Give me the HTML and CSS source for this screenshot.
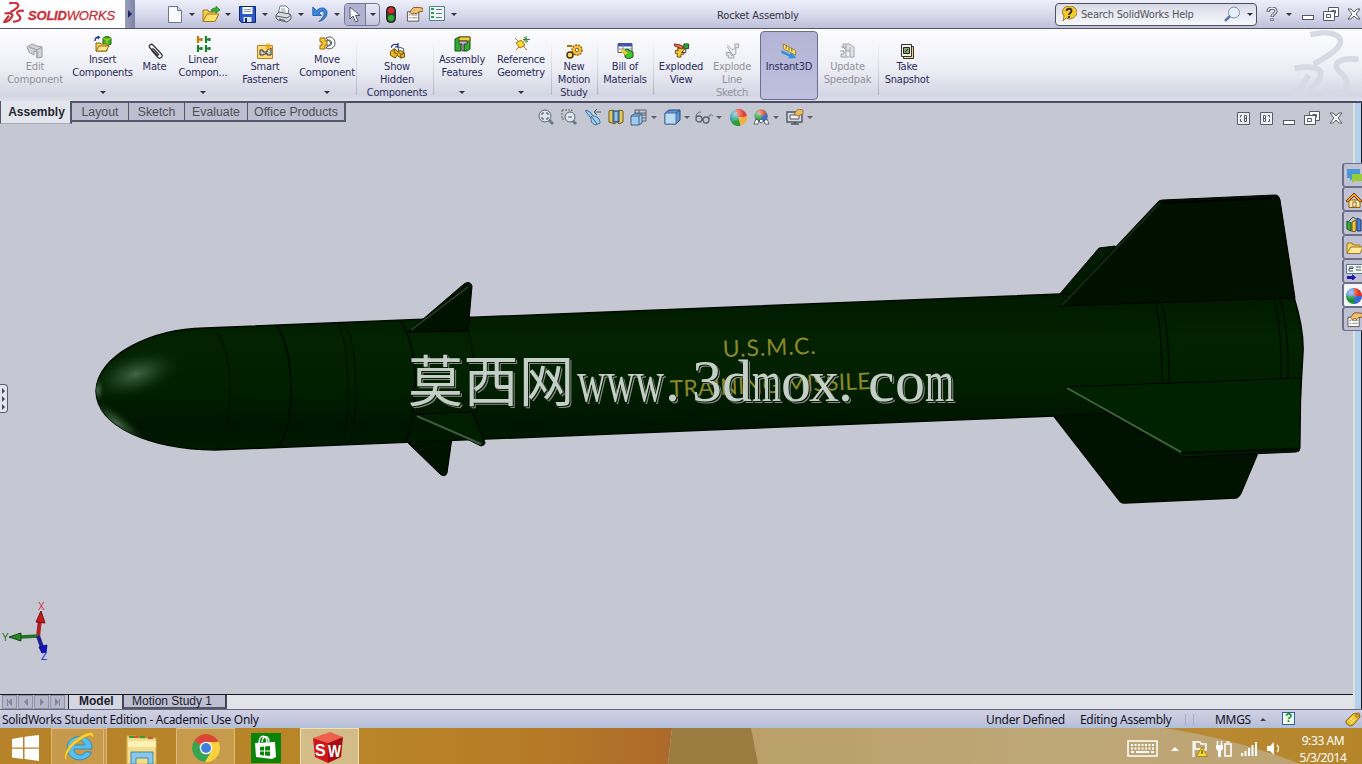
FILE: index.html
```html
<!DOCTYPE html>
<html lang="en">

<head>
    <meta charset="UTF-8">
    <meta name="viewport" content="width=device-width, initial-scale=1.0">
    <title>Rocket Assembly</title>
    <link rel="stylesheet" href="styles.css">
</head>

<body>
    <!-- shared shapes -->
    <svg class="defs" width="0" height="0">
        <defs>
            <radialGradient id="gloss" cx="32%" cy="28%" r="50%">
                <stop offset="0" stop-color="#fff" stop-opacity=".6" />
                <stop offset="1" stop-color="#fff" stop-opacity="0" />
            </radialGradient>
            <symbol id="ball" viewBox="0 0 16 16">
                <path d="M8 8V0a8 8 0 0 0-8 8z" fill="#3a78d8" />
                <path d="M8 8V0a8 8 0 0 1 8 8z" fill="#e03020" />
                <path d="M8 8H0a8 8 0 0 0 8 8z" fill="#189030" />
                <path d="M8 8v8a8 8 0 0 0 8-8z" fill="#3868d0" />
                <circle cx="8" cy="8" r="8" fill="url(#gloss)" />
            </symbol>
            <symbol id="ballgreen" viewBox="0 0 16 16">
                <path d="M8 8L5 .6A8 8 0 0 0 1 12z" fill="#2498a0" />
                <path d="M8 8L5 .6A8 8 0 0 1 16 7z" fill="#e2402c" />
                <path d="M8 8L1 12a8 8 0 0 0 9 3.700z" fill="#2a9c38" />
                <path d="M8 8l2 7.700A8 8 0 0 0 16 7z" fill="#f0b040" />
                <circle cx="8" cy="8" r="8" fill="url(#gloss)" />
            </symbol>
            <symbol id="restore" viewBox="0 0 16 14">
                <path d="M5.500 4.500v-4h10v9h-4M.5 4.500h11v9H.5zM3.500 7.500h4v3h-4zM8.500 3.500h4v3" fill="#fff" stroke="#55586a" />
            </symbol>
            <symbol id="close" viewBox="0 0 14 12">
                <path d="M1 1h3l3 3 3-3h3L9 6l4 5h-3L7 8l-3 3H1l4-5z" fill="#fff" stroke="#55586a" />
            </symbol>
            <symbol id="card" viewBox="0 0 18 17">
                <path d="M1.500 5.500h12v10h-12z" fill="#fdfdf6" stroke="#55545a" />
                <path d="M3 9h2M6 9h6M3 12h2M6 12h6" stroke="#888" />
                <path d="M4 6l4-5h6l4 1v3l-5 1-2 2-2-1-3 1z" fill="#f6c070" stroke="#6a4510" stroke-width=".9" />
            </symbol>
            <symbol id="ds" viewBox="0 0 64 62">
                <path d="M18 4C38-1 52 6 41 17 35 23 29 26 21 30" />
                <path d="M4 34C22 31 33 34 24 46 18 55 9 59 3 59L17 40" />
                <path d="M61 26C46 24 36 29 44 37 56 47 52 57 29 58" />
            </symbol>
        </defs>
    </svg>

    <div class="titlebar">
        <div class="brand">
            <svg class="brand-ds" width="22" height="21" viewBox="0 0 64 62"><use href="#ds" /></svg>
            <span class="brand-name"><b>SOLID</b>WORKS</span>
        </div>
        <div class="brand-more"><i></i></div>
        <div class="quick">
            <svg class="q-new" width="14" height="17" viewBox="0 0 14 17"><path d="M.5.5h9l4 4v12H.5z" fill="#fbfcff" stroke="#687890" /><path d="M9.500.5v4h4" fill="#cfdae8" stroke="#687890" /></svg>
            <i class="arrow"></i>
            <svg class="q-open" width="18" height="17" viewBox="0 0 18 17"><path d="M1 15V4h5l1 2h7v3" fill="#f6d050" stroke="#a07818" /><path d="M1 15.500L5 8h12l-4 7.500z" fill="#ffe070" stroke="#a07818" /><path d="M9 6c0-4 3-4 5-4V0l4 4-4 3V5c-2 0-4 0-5 1z" fill="#38b038" stroke="#157015" stroke-width=".6" /></svg>
            <i class="arrow"></i>
            <svg class="q-save" width="17" height="17" viewBox="0 0 17 17"><path d="M.5.5h16v16H2.500l-2-2z" fill="#2858c8" stroke="#102868" /><path d="M3.500 1h10v7h-10z" fill="#fff" /><path d="M5 3.500h7M5 5.500h7" stroke="#7a9ac8" /><path d="M4.500 11h8v5h-8z" fill="#dce6f4" /><path d="M6 12h2v4H6z" fill="#102868" /></svg>
            <i class="arrow"></i>
            <svg class="q-print" width="17" height="18" viewBox="0 0 17 18"><path d="M3 9L5 1h6l3 3-1 5z" fill="#fff" stroke="#778" /><path d="M6 4h4M6 6h5" stroke="#7ab" /><path d="M1 10l3-3 11 2 1 2v3l-4 3-9-2-2-2z" fill="#d8dade" stroke="#555a68" /><path d="M1 11l11 2 4-3M4 14l6 1.500" fill="none" stroke="#555a68" /></svg>
            <i class="arrow"></i>
            <svg class="q-undo" width="17" height="17" viewBox="0 0 17 17"><path d="M4.500 4.500c6-5 11-2 10.500 3-.5 4-4 7-8 8 3-3 5-5 5-8 0-3-3-3-5-.5l2.500 2.500H.8V1z" fill="#3a86dc" stroke="#1650a0" stroke-width=".8" /></svg>
            <i class="arrow"></i>
            <span class="select">
                <span class="select-main"><svg width="12" height="17" viewBox="0 0 12 17"><path d="M1 1v12l3-3 2.500 6 2.500-1-2.500-5.500H11z" fill="#fff" stroke="#555868" /></svg></span>
                <span class="select-more"><i class="arrow"></i></span>
            </span>
            <svg class="q-light" width="10" height="17" viewBox="0 0 10 17"><rect x=".5" y=".5" width="9" height="16" rx="4" fill="#413b35" stroke="#222" /><circle cx="5" cy="4.500" r="3" fill="#e02828" /><circle cx="5" cy="12" r="3" fill="#28b028" /></svg>
            <svg class="q-card" width="17" height="17" viewBox="0 0 18 17"><use href="#card" /></svg>
            <svg class="q-list" width="16" height="16" viewBox="0 0 16 16"><path d="M.5.5h15v14H.5z" fill="#eef6f6" stroke="#588098" /><path d="M2 3h3M2 7h3M2 11h3" stroke="#28a040" stroke-width="2" /><path d="M7 3.500h6M7 7.500h6M7 11.500h6" stroke="#588098" /></svg>
            <i class="arrow"></i>
        </div>
        <div class="doc-title">Rocket Assembly</div>
        <div class="search">
            <svg width="16" height="16" viewBox="0 0 16 16"><path d="M5 12l-3 3 1-5C-1 5 3 0 8 0c5 0 8 3 8 6.500S12 13 8 13z" fill="#f4c830" stroke="#906810" stroke-width=".8" /><path d="M5.500 5c0-3 5-3 5 0 0 2-2.500 2-2.500 4M8 10v2" fill="none" stroke="#303030" stroke-width="1.800" /></svg>
            <span>Search SolidWorks Help</span>
            <svg class="glass" width="17" height="17" viewBox="0 0 17 17"><path d="M6 10l-5 5" stroke="#5878a8" stroke-width="2.500" /><circle cx="10" cy="6.500" r="5.500" fill="#e4f0fa" stroke="#8090a8" /></svg>
            <i class="arrow"></i>
        </div>
        <div class="winbtns">
            <svg class="w-help" width="12" height="15" viewBox="0 0 12 15"><path d="M2 5c0-5 8-5 8-1 0 3-4 3-4 6M6 11.500V14" fill="none" stroke="#55586a" stroke-width="3.200" /><path d="M2 4.500c0-4.500 8-4.500 8-.5 0 3-4 3-4 5.500M6 12v1.500" fill="none" stroke="#fff" stroke-width="1.200" /></svg>
            <i class="arrow"></i>
            <i class="min"></i>
            <svg width="16" height="14"><use href="#restore" /></svg>
            <svg class="w-close" width="14" height="12"><use href="#close" /></svg>
        </div>
    </div>

    <div class="ribbon">
        <div class="cmd off" style="width:70px">
            <svg width="18" height="16" viewBox="0 0 18 16"><path d="M1 4l5-3 5 2 5 1v10l-5 1V9L8 8v4L3 9z" fill="#d2d3d8" stroke="#9a9ba2" /><path d="M3 4l8 3 5-3M11 7v8" fill="none" stroke="#9a9ba2" /></svg>
            <span>Edit<br>Component</span>
        </div>
        <div class="cmd drop" style="width:65px">
            <svg width="18" height="16" viewBox="0 0 18 16"><path d="M9 2l4-2 4 2v6l-4 2-4-2z" fill="#38b828" stroke="#176010" /><path d="M9 2l4 2 4-2M13 4v6" fill="none" stroke="#e0d020" /><path d="M2 15V7h4l1 1h6v7z" fill="#f7cf58" stroke="#906a10" /><path d="M2 15l3-5h10l-3 5z" fill="#ffe98c" stroke="#906a10" /><path d="M1 5c0-3 2-4 4-4l-1-1M5 1L4 3" fill="none" stroke="#1838a8" stroke-width="1.400" /></svg>
            <span>Insert<br>Components</span><i class="arrow"></i>
        </div>
        <div class="cmd" style="width:39px">
            <svg width="16" height="16" viewBox="0 0 16 16"><path d="M11 13L3 5C1 3 4 0 6 2l8 8.500c3 3-1 6-3 4L5 8c-1-1.500.5-3 2-1.500l5 5.500" fill="none" stroke="#333" stroke-width="1.200" /></svg>
            <span>Mate</span>
        </div>
        <div class="cmd drop" style="width:58px">
            <svg width="15" height="16" viewBox="0 0 15 16"><path d="M2 0v7M2 3.500h4M5.500 2v3" stroke="#c07808" stroke-width="2.200" /><path d="M10 0v7M10 3.500h4M13.500 2v3M2 9v7M2 12.500h4M5.500 11v3M10 9v7M10 12.500h4M13.500 11v3" stroke="#188028" stroke-width="2.200" /></svg>
            <span>Linear<br>Compon...</span><i class="arrow"></i>
        </div>
        <div class="cmd" style="width:66px">
            <svg width="17" height="16" viewBox="0 0 17 16"><path d="M.5 2.500h15v13H.5z" fill="#ffd878" stroke="#c08020" /><path d="M3 7h3v2h4V7l4-2v7h-4v-2l-4 2H3z" fill="#d0d0c0" stroke="#333" /><path d="M11 0v7M8 3h7M9 1l4 5M13 1L9 6" stroke="#f0a000" /></svg>
            <span>Smart<br>Fasteners</span>
        </div>
        <div class="cmd drop" style="width:58px">
            <svg width="17" height="16" viewBox="0 0 17 16"><path d="M7 2c5-3 9 1 9 5 0 5-5 7-9 5l2-2c5 0 5-6 0-6z" fill="#fff" stroke="#555" /><circle cx="9" cy="7" r="2.500" fill="#fff" stroke="#555" /><path d="M1 2h5v3h2v4H6v4H1V9h2V6H1z" fill="#f7c830" stroke="#a06808" /></svg>
            <span>Move<br>Component</span><i class="arrow"></i>
        </div>
        <div class="cmd line" style="width:77px;padding-left:5px">
            <svg width="17" height="17" viewBox="0 0 17 17"><path d="M2 5c0-4 5-4 7-3M9 0v4H6" fill="none" stroke="#1838a8" stroke-width="1.300" /><path d="M9 4l6 2v5l-5-2z" fill="#fff" stroke="#444" /><path d="M1 9l4-3 4 3 3-1 4 3v4l-4 1-4-3-2 3-5-3z" fill="#e8b820" stroke="#664808" /><path d="M5 6v4l4 2M9 9l3 3 4-1M12 12v4" fill="none" stroke="#664808" /></svg>
            <span>Show<br>Hidden<br>Components</span>
        </div>
        <div class="cmd drop line" style="width:58px">
            <svg width="17" height="16" viewBox="0 0 17 16"><path d="M1 3l4-2h11v12l-3 2h-3V8H7v7H1z" fill="#2fb02c" stroke="#14501a" /><path d="M5 1h11v4H5z" fill="#f6cf40" stroke="#705010" /><path d="M5 5h8v3h-3v7H8V8H5z" fill="#bbb" stroke="#444" /></svg>
            <span>Assembly<br>Features</span><i class="arrow"></i>
        </div>
        <div class="cmd drop" style="width:60px">
            <svg width="17" height="16" viewBox="0 0 17 16"><path d="M2 2l12 12M14 2L3 14" stroke="#b07808" /><path d="M3 7l5-3 4 5-5 3z" fill="#ffd838" stroke="#a87008" /><path d="M13 0v7M10 3.500h7M11 1l4 5" stroke="#288838" /></svg>
            <span>Reference<br>Geometry</span><i class="arrow"></i>
        </div>
        <div class="cmd line" style="width:46px">
            <svg width="17" height="16" viewBox="0 0 17 16"><path d="M1 3h5" stroke="#b07010" stroke-width="2" /><circle cx="11" cy="7" r="5" fill="#ffc838" stroke="#8a5808" stroke-dasharray="2 1" stroke-width="1.400" /><circle cx="11" cy="7" r="1.800" fill="#fff" stroke="#8a5808" /><circle cx="4" cy="12" r="3" fill="#ffd860" stroke="#4a3408" stroke-width="1.500" /></svg>
            <span>New<br>Motion<br>Study</span>
        </div>
        <div class="cmd line" style="width:56px">
            <svg width="17" height="16" viewBox="0 0 17 16"><path d="M1 .5h14v9H1z" fill="#fff" stroke="#556" /><path d="M1 2h14" stroke="#3858b0" stroke-width="3" /><path d="M1 6h14M6 2v7" stroke="#889" /><path d="M5 9l5-3 6 3v5l-5 2-3-2v-2z" fill="#48c030" stroke="#1a6014" /><path d="M3 8l3-2 5 4-3 2z" fill="#f4c838" /></svg>
            <span>Bill of<br>Materials</span>
        </div>
        <div class="cmd line" style="width:56px">
            <svg width="17" height="17" viewBox="0 0 17 17"><path d="M11 1h5v5h-5z" fill="#30a038" stroke="#165018" /><path d="M1 1l6 1 4 2-3 2-7-3z" fill="#e87848" stroke="#702010" /><path d="M4 6h8l-3 4h2v2H8v3H4v-4H2V8h3z" fill="#f8c838" stroke="#704808" /><path d="M13 6v4H8" fill="none" stroke="#333" /></svg>
            <span>Exploded<br>View</span>
        </div>
        <div class="cmd off" style="width:46px">
            <svg width="17" height="17" viewBox="0 0 17 17"><path d="M11 1h4v4h-4zM2 10h5v3h3v3H4v-3H2z" fill="#e4e4e9" stroke="#a2a3aa" /><path d="M3 2l5 5 4-1v6H8L3 4" fill="none" stroke="#a2a3aa" /></svg>
            <span>Explode<br>Line<br>Sketch</span>
        </div>
        <div class="cmd pressed">
            <svg width="18" height="17" viewBox="0 0 18 17"><path d="M3 1l13 7v5L3 6z" fill="#ffe870" stroke="#a07828" /><path d="M6 3v3M9 5v3M12 6v3" stroke="#705010" /><path d="M1 7.500l9 4.500 1-2 6 6-9 .5 1.500-2L1 10.500z" fill="#3090d8" /></svg>
            <span>Instant3D</span>
        </div>
        <div class="cmd off" style="width:61px">
            <svg width="17" height="16" viewBox="0 0 17 16"><path d="M4 1h6l5 3v10h-4V8H8L4 4zM1 8h4v3H2v3h8" fill="#e2e2e7" stroke="#a2a3aa" /><path d="M2 4h5M7 2v11M11 4v4" stroke="#a2a3aa" /></svg>
            <span>Update<br>Speedpak</span>
        </div>
        <div class="cmd line" style="width:58px">
            <svg width="15" height="16" viewBox="0 0 15 16"><path d="M3.500 3.500h10v12h-10z" fill="#e8d890" stroke="#333" /><path d="M1.500 1.500h10v12h-10z" fill="#f4f4e4" stroke="#333" /><path d="M3.500 4.500h6v6h-6z" fill="#88a870" stroke="#222" /><path d="M5 9l3-3" stroke="#222" /></svg>
            <span>Take<br>Snapshot</span>
        </div>
        <svg class="ribbon-ds" width="72" height="70" viewBox="0 0 64 62"><use href="#ds" /></svg>
    </div>

    <div class="view">
        <svg class="scene" width="1362" height="591" viewBox="0 103 1362 591">
            <defs>
                <linearGradient id="hull" x1="0" y1="0" x2=".04" y2="1">
                    <stop offset="0" stop-color="#001900" />
                    <stop offset=".3" stop-color="#022200" />
                    <stop offset=".6" stop-color="#002000" />
                    <stop offset=".85" stop-color="#001500" />
                    <stop offset="1" stop-color="#001a00" />
                </linearGradient>
                <radialGradient id="shine">
                    <stop offset="0" stop-color="#54765a" stop-opacity=".8" />
                    <stop offset=".45" stop-color="#2c502c" stop-opacity=".55" />
                    <stop offset="1" stop-color="#022200" stop-opacity="0" />
                </radialGradient>
                <clipPath id="nose"><path d="M96 391C97 356 150 329 205 328L1060 294V416L215 450C150 449 97 427 96 391z" /></clipPath>
            </defs>

            <!-- rear fins behind the hull -->
            <path d="M1053 415L1119 500Q1121 503 1125 503L1236 498Q1239 497 1241 493L1257 455L1180 400z" fill="#001300" stroke="#000a00" stroke-width="1.500" />
            <path d="M1058 296L1099 248L1115 246L1130 260L1090 300z" fill="#001a00" stroke="#000" />
            <path d="M406 441L440 474Q445 478 447 473L452 438z" fill="#001200" stroke="#000" />

            <!-- hull -->
            <path d="M96 391C97 356 150 329 205 328L1060 294L1294 297Q1304 330 1303 352L1300 404L1055 416L215 450C150 449 97 427 96 391z" fill="url(#hull)" stroke="#000a00" stroke-width="1.500" />
            <g clip-path="url(#nose)">
                <ellipse cx="136" cy="374" rx="50" ry="24" fill="url(#shine)" transform="rotate(-16 136 374)" />
                <ellipse cx="117" cy="423" rx="38" ry="12" fill="url(#shine)" transform="rotate(38 117 423)" />
                <ellipse cx="98" cy="390" rx="7" ry="14" fill="url(#shine)" />
            </g>
            <g fill="none" stroke="#000b00">
                <path d="M212 328Q230 345 230 385T219 450" />
                <path d="M276 325Q290 345 291 385T279 447" stroke-width="1.800" />
                <path d="M338 323Q348 345 348 385T343 445M345 323Q356 345 356 385T350 444" />
                <path d="M401 321Q415 345 415 380T406 442" stroke-width="1.800" />
                <path d="M468 331Q474 350 475 380T476 436" />
                <path d="M1155 302Q1162 325 1162 381M1161 302Q1169 325 1169 381M1274 299Q1282 330 1281 378M1280 299Q1289 330 1288 378" stroke-width="1.500" />
            </g>

            <!-- front fins -->
            <path d="M408 332L464 284Q470 280 472 286L468 331z" fill="#001200" stroke="#000" />
            <path d="M411 330L468 287" stroke="#28452a" stroke-width="1.500" />
            <path d="M416 414L481 446Q487 445 484 440L472 412z" fill="#001e00" stroke="#000" />
            <path d="M417 416L481 444" stroke="#3c5a3e" stroke-width="2" />

            <!-- tail fins -->
            <path d="M1060 306L1158 202Q1159 200 1163 200L1275 195Q1279 195 1280 200L1295 298L1060 306z" fill="#001100" stroke="#000" />
            <path d="M1062 305L1160 203" stroke="#122a14" stroke-width="2" />
            <path d="M1163 203L1277 198" stroke="#000" stroke-width="2" />
            <path d="M1066 387L1301 378L1300 448Q1300 452 1296 452L1182 457z" fill="#002200" stroke="#000" />
            <path d="M1182 453L1299 449" stroke="#000c00" stroke-width="3" />
            <path d="M1067 388L1181 452" stroke="#42633f" stroke-width="2" />

            <g class="decal">
                <text x="723" y="357" textLength="93" transform="rotate(-2 723 357)">U.S.M.C.</text>
                <text x="670" y="397" textLength="201" transform="rotate(-2.300 670 397)">TRAINING MISSILE</text>
            </g>
            <g class="mark">
                <text class="mark-cjk" x="408" y="401" textLength="166">莫西网</text>
                <text y="401"><tspan x="577" textLength="87" lengthAdjust="spacingAndGlyphs">www</tspan><tspan x="665">.</tspan><tspan x="692">3</tspan><tspan x="722">d</tspan><tspan x="752" textLength="29" lengthAdjust="spacingAndGlyphs">m</tspan><tspan x="781">o</tspan><tspan x="809">x</tspan><tspan x="838">.</tspan><tspan x="868">c</tspan><tspan x="895">o</tspan><tspan x="925" textLength="29" lengthAdjust="spacingAndGlyphs">m</tspan></text>
            </g>

            <!-- axis triad -->
            <path d="M38 637L40 619" stroke="#b02020" stroke-width="4" />
            <path d="M36 622l5-11 4 12z" fill="#c81818" stroke="#701010" />
            <path d="M38 636L20 637" stroke="#287028" stroke-width="3.500" />
            <path d="M21 633L9 637l12 4z" fill="#288828" stroke="#104810" />
            <path d="M38 636l4 11" stroke="#202090" stroke-width="4" />
            <path d="M39 647l8-2-1 7-4 1z" fill="#1010c8" stroke="#101080" />
            <g class="axis">
                <text x="38" y="610" fill="#e02838">X</text>
                <text x="2" y="641" fill="#286828">Y</text>
                <text x="41" y="660" fill="#2020d0">Z</text>
            </g>
        </svg>

        <div class="tabs">
            <span class="tab active">Assembly</span>
            <span class="tab" style="width:57px">Layout</span>
            <span class="tab" style="width:56px">Sketch</span>
            <span class="tab" style="width:63px">Evaluate</span>
            <span class="tab" style="width:98px">Office Products</span>
        </div>

        <div class="hud">
            <svg width="17" height="17" viewBox="0 0 17 17"><path d="M10 10l5 5" stroke="#6a7a90" stroke-width="3" /><circle cx="7" cy="7" r="6" fill="#dfe5ee" stroke="#5c6474" /><path d="M4 6V4h2M8 4h2v2M10 8v2H8M6 10H4V8" fill="none" stroke="#444c5c" /></svg>
            <svg class="h2" width="17" height="17" viewBox="0 0 17 17"><path d="M1 1h10v9H1z" fill="none" stroke="#666" stroke-dasharray="2 1" /><path d="M11 11l4 4" stroke="#6a7a90" stroke-width="3" /><circle cx="9" cy="8" r="5" fill="#dfe5ee" stroke="#5c6474" /><path d="M7 8h4" stroke="#555" /></svg>
            <svg class="h3" width="17" height="17" viewBox="0 0 17 17"><path d="M1 1l4 2 3 4c4 0 7 3 7 7l-4 2c-4-1-5-3-5-7L1 3z" fill="#9cd0f4" stroke="#38689c" /><path d="M6 7l6 8M16 3H9M12 0L9 3l3 3" stroke="#4a6078" fill="none" /></svg>
            <svg class="h4" width="16" height="17" viewBox="0 0 16 17"><path d="M1 2l4-1 2 2v12l-6-2zM9 3l3-2 3 1v11l-4 2-2-2z" fill="#e8c858" stroke="#6a5a20" /><path d="M5 2h6v11H5z" fill="#5c98d0" stroke="#284868" /><path d="M8 3v9" stroke="#dce8f4" /></svg>
            <svg class="h5" width="18" height="17" viewBox="0 0 18 17"><path d="M5 5V1h11v11h-4M9 1v5M5 4h11M12 6h4M12 9h4" fill="none" stroke="#5a6270" /><path d="M1 7l3-2h8v9l-3 2H1z" fill="#9ecbef" stroke="#3c6288" /><path d="M1 7h8v9M9 7l3-2" fill="none" stroke="#3c6288" /></svg>
            <i class="arrow"></i>
            <svg class="h6" width="17" height="17" viewBox="0 0 17 17"><path d="M1 4l4-3h11v10l-4 4H1z" fill="#5e94d4" stroke="#2c4c80" /><path d="M1 4h11v11H1z" fill="#bddcf4" stroke="#4870a8" /><path d="M12 4l4-3" stroke="#2c4c80" /></svg>
            <i class="arrow"></i>
            <svg class="h7" width="18" height="14" viewBox="0 0 18 14"><circle cx="4" cy="9" r="3" fill="none" stroke="#5c6270" stroke-width="1.300" /><circle cx="11" cy="10" r="3" fill="none" stroke="#5c6270" stroke-width="1.300" /><path d="M1 8c0-5 3-6 5-6M7 9h2M14 9V6c1-2 3-1 4 0" fill="none" stroke="#5c6270" /></svg>
            <i class="arrow"></i>
            <svg class="h8" width="17" height="17"><use href="#ballgreen" /></svg>
            <svg class="h9" width="17" height="17" viewBox="0 0 17 17"><circle cx="8" cy="7" r="6.500" fill="#2e9c44" /><path d="M8 7L4 2a6.500 6.500 0 0 1 10 3z" fill="#e04838" /><path d="M8 7l6-2a6 6 0 0 1-3 8z" fill="#3c70cc" /><circle cx="8" cy="7" r="6.500" fill="url(#gloss)" /><path d="M3 10l-2 5h4l1-3 2 2 3-2 1 3h4l-2-5-3 2-3-2-2 2z" fill="#fff" stroke="#445" stroke-width=".8" /></svg>
            <i class="arrow"></i>
            <svg class="h10" width="18" height="17" viewBox="0 0 18 17"><path d="M1 3h15v10H1zM5 15h8M9 13v2" fill="#d8dbe0" stroke="#505662" stroke-width="1.400" /><path d="M4 6h9v4H4z" fill="#f4f4f4" stroke="#505662" /><path d="M8 5l4-5 5 1v4l-5 2z" fill="#efb860" stroke="#7c5a28" stroke-width=".7" /></svg>
            <i class="arrow"></i>
        </div>

        <div class="docbtns">
            <svg width="13" height="13" viewBox="0 0 13 13"><path d="M.5.5h12v12H.5z" fill="#eef0f4" stroke="#5a5d6c" /><path d="M5 3.500H3.500v2M3.500 7v2.500H5M7.500 3.500h2v6h-2zM7.500 6.500h2" fill="none" stroke="#5a5d6c" /></svg>
            <svg width="13" height="13" viewBox="0 0 13 13"><path d="M.5.5h12v12H.5z" fill="#eef0f4" stroke="#5a5d6c" /><path d="M3.500 3.500h2v6h-2zM3.500 6.500h2M8 3.500h1.500v2M9.500 7v2.500H8" fill="none" stroke="#5a5d6c" /></svg>
            <i class="min"></i>
            <svg class="d-restore" width="16" height="14"><use href="#restore" /></svg>
            <svg class="d-close" width="14" height="12"><use href="#close" /></svg>
        </div>

        <div class="left-handle"><i></i><i></i><i></i></div>
        <div class="right-edge"></div>

        <div class="pane-tabs">
            <span><svg width="16" height="16" viewBox="0 0 16 16"><path d="M1 1h13v9H7l-3 3v-3H1z" fill="#4898d8" /><path d="M6 6h12v7H9l-3 2z" fill="#98cc38" /></svg></span>
            <span><svg width="16" height="16" viewBox="0 0 16 16"><path d="M3 8h11v7.500H3z" fill="#ffeaa0" stroke="#906010" /><path d="M0 9l8-8 8 8-2 1-6-6-6 6z" fill="#f4a820" stroke="#803808" /><path d="M7 10h3v5H7z" fill="#fff" stroke="#906010" /></svg></span>
            <span><svg width="16" height="16" viewBox="0 0 16 16"><path d="M1 5l4 2v8l-4-2z" fill="#38b038" stroke="#145014" /><path d="M6 6l4-2v11l-4 1z" fill="#f2c840" stroke="#705010" /><path d="M11 2l4 2v11h-4z" fill="#4880d8" stroke="#183870" /><path d="M3 5l4-4 3 2" fill="none" stroke="#286828" /></svg></span>
            <span><svg width="16" height="16" viewBox="0 0 16 16"><path d="M1 13V3h5l1 2h7v3" fill="#f4d468" stroke="#a07818" /><path d="M1 13.500L5 7h12l-3 6.500z" fill="#ffeaa0" stroke="#a07818" /></svg></span>
            <span><svg width="16" height="16" viewBox="0 0 16 16"><path d="M.5.500h16v9H.5z" fill="#f4f6e8" stroke="#5878a0" /><path d="M3 3h4v1.500H3V7h4M10 3h5M10 6h5" fill="none" stroke="#405878" /><path d="M1 12h5v-2l4 3.500L6 17v-2H1z" fill="#1818b0" /></svg></span>
            <span class="on"><svg width="16" height="16" viewBox="0 0 16 16"><use href="#ball" /></svg></span>
            <span><svg width="18" height="16" viewBox="0 0 18 17"><use href="#card" /></svg></span>
        </div>
    </div>

    <div class="sheets">
        <div class="nav"><span><b></b><i class="prev"></i></span><span><i class="prev"></i></span><span><i class="next"></i></span><span><i class="next"></i><b></b></span></div>
        <span class="sheet model">Model</span>
        <span class="sheet">Motion Study 1</span>
    </div>

    <div class="status">
        <span class="edition">SolidWorks Student Edition - Academic Use Only</span>
        <span class="under">Under Defined</span>
        <span class="editing">Editing Assembly</span>
        <i class="tick"></i><i class="tick"></i>
        <span class="units">MMGS</span>
        <i class="up"></i>
        <span class="q">?</span>
        <svg class="tag" width="16" height="15" viewBox="0 0 16 15"><path d="M1 9l7-7 6-1 1 4-7 8-3 1-4-3z" fill="#f4c420" stroke="#886008" /><circle cx="12" cy="4" r="1.300" fill="#fff" stroke="#886008" /><path d="M4 9l4-4M6 11l4-4" stroke="#fff" /></svg>
    </div>

    <div class="taskbar">
        <svg class="wall" width="1362" height="36" viewBox="0 0 1362 36" preserveAspectRatio="none">
            <defs>
                <linearGradient id="w1"><stop offset="0" stop-color="#b6832a" /><stop offset=".55" stop-color="#b98528" /><stop offset=".8" stop-color="#b67a27" /><stop offset="1" stop-color="#ad692a" /></linearGradient>
                <linearGradient id="w2"><stop offset="0" stop-color="#baa068" /><stop offset=".5" stop-color="#bea778" /><stop offset="1" stop-color="#bca273" /></linearGradient>
                <linearGradient id="w3"><stop offset="0" stop-color="#b98a34" /><stop offset="1" stop-color="#b5852a" /></linearGradient>
            </defs>
            <path d="M0 0h672l-4 36H0z" fill="url(#w1)" />
            <path d="M672 0h80l7 36h-91z" fill="#9b7c40" />
            <path d="M751 0h611v36H758z" fill="url(#w2)" />
            <path d="M1165 0h197v36h-62Q1240 12 1165 0z" fill="url(#w3)" />
        </svg>
        <div class="app start"><svg width="27" height="26" viewBox="0 0 27 26"><path d="M0 4l11-2v10.500H0zM12.500 1.800L27 0v12.500H12.500zM0 13.800h11V24L0 22.500zM12.500 13.800H27V26l-14.500-2z" fill="#fff" /></svg></div>
        <div class="app run ie"><svg width="32" height="32" viewBox="0 0 32 32"><path d="M29 18H11c0 7 9 8 11 3h6.500C24 33 5 31 4 17 4 2 30 1 29 18zM11 14h11c-1-6-10-6-11 0z" fill="#58c0f0" stroke="#1c84c4" stroke-width=".8" /><path d="M4 30C-3 26 6 9 24 2c6-2 8 1 6 6 0-4-3-4-7-2C10 12 1 24 4 30z" fill="#f8d030" stroke="#c89818" stroke-width=".5" /></svg></div>
        <div class="app files"><svg width="32" height="30" viewBox="0 0 32 30"><path d="M1 2h9l2 2h18v26H1z" fill="#f4dc88" stroke="#d0b050" /><path d="M3 3h5M14 3h5" stroke="#389838" stroke-width="2" /><path d="M8 3h4M22 4h5" stroke="#c85838" stroke-width="2" /><path d="M2 7h28v6H2z" fill="#fff0b8" /><path d="M5 30V18h22v12h-5v-6H10v6z" fill="#88c8e8" stroke="#4888b0" /></svg></div>
        <div class="app run chrome"><svg width="28" height="28" viewBox="0 0 28 28"><path d="M14 14L2 7a14 14 0 0 1 24.200 0z" fill="#dd4636" /><path d="M14 14l-12-7a14 14 0 0 0 11 21l7-10z" fill="#38a350" /><path d="M14 8h12.600A14 14 0 0 1 13 28l7-12z" fill="#fbd13c" /><circle cx="14" cy="14" r="6.300" fill="#fff" /><circle cx="14" cy="14" r="5" fill="#3f80dc" /></svg></div>
        <div class="app"><svg width="30" height="30" viewBox="0 0 30 30"><path d="M0 0h30v30H0z" fill="#088408" /><path d="M4 10l20-1 1 15-4 2-16-2z" fill="#fff" /><path d="M8 10c0-9 8-9 8 0M11 9c1-8 7-6 7 0" fill="none" stroke="#fff" stroke-width="1.300" /><path d="M9 14l4-.5v4H9zM14 13.400l5-.4v4.500h-5zM9 18.500h4v4l-4-.5zM14 18.500h5V23l-5-.5z" fill="#088408" /></svg></div>
        <div class="app current"><svg width="32" height="31" viewBox="0 0 32 31"><path d="M1 6L18 0l13 5-15 6z" fill="#f06050" /><path d="M1 6l15 5v20L3 25z" fill="#d01818" /><path d="M16 11l15-6-2 20-13 6z" fill="#a80c10" /><g class="sw"><text x="3" y="24">S</text><text x="16" y="25" textLength="13" lengthAdjust="spacingAndGlyphs">W</text></g></svg></div>
        <div class="tray">
            <svg width="31" height="17" viewBox="0 0 31 17"><path d="M1 1h29v15H1z" fill="none" stroke="#fff" stroke-width="1.500" /><path d="M4 5h23M4 8.500h23" stroke="#fff" stroke-width="2" stroke-dasharray="2 1.500" /><path d="M4 12h3M9 12h13M24 12h3" stroke="#fff" stroke-width="2" /></svg>
            <i class="tray-up"></i>
            <svg class="t-flag" width="17" height="16" viewBox="0 0 17 16"><path d="M1.500 0v16" stroke="#fff" stroke-width="2" /><path d="M3 1h5l1 2h5v6H9L8 8H3z" fill="none" stroke="#fff" stroke-width="1.500" /><path d="M10 6l5.500 9.500h-11z" fill="#f8d828" stroke="#7c6410" stroke-width=".6" /><path d="M10 9v4" stroke="#333" /></svg>
            <svg class="t-power" width="16" height="16" viewBox="0 0 16 16"><path d="M1.500 0v4M5.500 0v4" stroke="#fff" stroke-width="1.500" /><path d="M0 4h7v4L5 10v6H2v-6L0 8z" fill="#fff" /><path d="M9 3h6v12H9zM10.500 1h3" fill="none" stroke="#fff" stroke-width="1.600" /></svg>
            <svg class="t-net" width="16" height="14" viewBox="0 0 16 14"><path d="M1 14v-3M4.500 14V9M8 14V6M11.500 14V3M15 14V0" stroke="#fff" stroke-width="2" /></svg>
            <svg class="t-sound" width="14" height="15" viewBox="0 0 14 15"><path d="M0 5h3l4-4v13l-4-4H0z" fill="#fff" /><path d="M10 4c2 2 2 5 0 7" fill="none" stroke="#fff" stroke-width="1.300" /></svg>
            <div class="clock">9:33 AM<br>5/3/2014</div>
        </div>
    </div>
</body>

</html>
```
FILE: styles.css
```css
* {
    margin: 0;
    padding: 0;
    box-sizing: border-box;
}

body {
    width: 1362px;
    height: 764px;
    overflow: hidden;
    display: flex;
    flex-direction: column;
    font-family: "DejaVu Sans Condensed", "DejaVu Sans", sans-serif;
    font-size: 11px;
    color: #2c2c5c;
    background: #c5c8d3;
}

svg {
    display: block;
    flex: none;
}

.defs {
    position: absolute;
}

.arrow {
    display: block;
    flex: none;
    width: 0;
    height: 0;
    border: 3px solid transparent;
    border-top-color: #33343e;
    border-bottom: 0;
}

.min {
    width: 12px;
    height: 5px;
    border: 1px solid #55586a;
    background: #fff;
}

/* title bar */
.titlebar {
    height: 29px;
    display: flex;
    align-items: center;
    border-bottom: 1px solid #55566e;
    background: linear-gradient(#eeeffb, #d9daec 50%, #bfc0da);
}

.brand {
    width: 125px;
    height: 28px;
    display: flex;
    align-items: center;
    padding-left: 3px;
    background: #fff;
    color: #c8303a;
}

.brand-ds {
    margin-top: -3px;
    fill: none;
    stroke: #c8303a;
    stroke-width: 6.5;
}

.brand-name {
    margin: 4px 0 0 3px;
    font: italic 13px/16px "Liberation Sans", sans-serif;
    letter-spacing: -0.2px;
    -webkit-text-stroke: 0.3px #c8303a;
}

.brand-more {
    width: 10px;
    height: 28px;
    padding: 10px 0 0 3px;
    background: linear-gradient(90deg, #9c9ebc, #7f82a4);
}

.brand-more i {
    display: block;
    border: 4px solid transparent;
    border-left-color: #1c2468;
    border-right: 0;
}

.quick {
    width: 325px;
    height: 28px;
    display: flex;
    align-items: center;
}

.q-new { margin-left: 33px; }
.q-new + .arrow { margin-left: 7px; }
.q-open { margin-left: 7px; }
.q-open + .arrow { margin-left: 5px; }
.q-save { margin-left: 8px; }
.q-save + .arrow { margin-left: 6px; }
.q-print { margin-left: 7px; }
.q-print + .arrow { margin-left: 6px; }
.q-undo { margin-left: 8px; }
.q-undo + .arrow { margin-left: 5px; }

.select {
    flex: none;
    width: 36px;
    height: 23px;
    margin-left: 4px;
    display: flex;
    border: 1px solid #74758f;
    border-radius: 4px;
    overflow: hidden;
}

.select-main {
    width: 21px;
    padding: 2px 0 0 4px;
    background: #b1b1d2;
    border-right: 1px solid #74758f;
}

.select-more {
    padding: 9px 0 0 4px;
}

.q-light { margin-left: 6px; }
.q-card { margin-left: 10px; }
.q-list { margin-left: 6px; }
.q-list + .arrow { margin-left: 6px; }

.doc-title {
    flex: 1;
    padding-left: 257px;
    padding-top: 2px;
    letter-spacing: -0.15px;
    color: #34343f;
}

.search {
    width: 202px;
    height: 23px;
    display: flex;
    align-items: center;
    padding: 0 3px 0 5px;
    border: 1px solid #4d4e5c;
    border-radius: 4px;
    background: linear-gradient(#d9dae8, #f7f8fc);
    color: #55565e;
}

.search span {
    flex: 1;
    margin-left: 4px;
    padding-top: 1px;
    letter-spacing: -0.2px;
    white-space: nowrap;
}

.glass {
    margin-right: 6px;
}

.winbtns {
    width: 105px;
    height: 28px;
    display: flex;
    align-items: center;
}

.w-help { margin-left: 9px; }
.winbtns .arrow { margin-left: 8px; }
.winbtns .min { margin: 6px 9px 0 10px; }
.w-close { margin-left: 8px; }

/* command ribbon */
.ribbon {
    height: 74px;
    flex: none;
    display: flex;
    position: relative;
    border-top: 1px solid #fff;
    border-bottom: 2px solid #4c4d64;
    background: linear-gradient(#fdfdff, #eff0f7 50%, #d5d6e4 92%, #dedfea);
}

.cmd {
    flex: none;
    padding-top: 13px;
    display: flex;
    flex-direction: column;
    align-items: center;
    text-align: center;
    line-height: 13px;
    letter-spacing: -0.2px;
    white-space: nowrap;
}

.cmd svg {
    height: 16px;
}

.cmd span {
    margin-top: 1px;
}

.cmd.drop {
    padding-top: 6px;
}

.cmd .arrow {
    margin-top: 12px;
}

.cmd.line {
    background: linear-gradient(#fff, #b3b4c4) no-repeat left 5px / 1px 60px;
}

.cmd.off {
    color: #92939b;
}

.cmd.pressed {
    width: 58px;
    height: 69px;
    margin: 1px -1px 0 5px;
    padding-top: 11px;
    border: 1px solid #6c6d94;
    border-radius: 4px;
    background: linear-gradient(#b4b5d6, #bfc0dd);
}

.ribbon-ds {
    position: absolute;
    right: 0;
    top: 0;
    fill: none;
    stroke: #d8d9e4;
    stroke-width: 5;
}

/* graphics area */
.view {
    height: 591px;
    flex: none;
    position: relative;
    background: #c5c8d3;
}

.scene {
    position: absolute;
    left: 0;
    top: 0;
}

.decal {
    font: 23px Lato, sans-serif;
    fill: #8d8728;
}

.mark {
    font: 60px "Liberation Serif", serif;
    fill: #c3cec6;
    filter: drop-shadow(1px 1px 0 #0a1a0a) drop-shadow(1px 1px 0 #858a7c);
}

.mark-cjk {
    font: 400 55px "Noto Sans CJK SC", sans-serif;
}

.axis {
    font: 10px "Liberation Sans", sans-serif;
}

.tabs {
    position: absolute;
    left: 0;
    top: -2px;
    display: flex;
    font: 12.3px/19px "Liberation Sans", sans-serif;
    color: #4d4e58;
}

.tab {
    height: 21px;
    border: 2px solid #55566a;
    border-left-width: 0;
    border-right-width: 1px;
    text-align: center;
    background: #bdbed0;
    white-space: nowrap;
}

.tab.active {
    width: 72px;
    height: 23px;
    padding-left: 2px;
    border-top: 0;
    border-bottom: 1px solid #a8a9b8;
    border-left: 1px solid #55566a;
    border-right: 2px solid #55566a;
    font-size: 12px;
    line-height: 23px;
    font-weight: bold;
    color: #26262e;
    background: #e4e6ee;
}

.tab:last-child {
    border-right-width: 2px;
}

.hud {
    position: absolute;
    left: 538px;
    top: 5px;
    height: 18px;
    display: flex;
    align-items: center;
}

.hud .arrow { margin-left: 3px; border-top-color: #5c5d68; }
.h2 { margin-left: 6px; }
.h3 { margin-left: 7px; }
.h4 { margin-left: 6px; }
.h5 { margin-left: 6px; }
.h6 { margin-left: 7px; }
.h7 { margin-left: 5px; }
.h8 { margin-left: 8px; }
.h9 { margin-left: 6px; }
.h10 { margin-left: 7px; }

.docbtns {
    position: absolute;
    left: 1237px;
    top: 8px;
    display: flex;
    align-items: center;
    gap: 10px;
}

.docbtns .min {
    margin: 8px -1px 0 0;
}

.d-close {
    margin-left: -1px;
}

.left-handle {
    position: absolute;
    left: 0;
    top: 281px;
    width: 8px;
    height: 29px;
    padding: 3px 0 0 2px;
    border: 1px solid #5c5d70;
    border-left: 0;
    border-radius: 0 4px 4px 0;
    background: #e2e4ee;
}

.left-handle i {
    display: block;
    margin-bottom: 2px;
    border: 3px solid transparent;
    border-left-color: #44465c;
    border-right: 0;
}

.right-edge {
    position: absolute;
    right: 0;
    top: 0;
    width: 9px;
    height: 606px;
    border-left: 2px solid #dce4e0;
    border-right: 1px solid #161c24;
    background: #b4d0ec;
    z-index: 1;
}

.pane-tabs {
    position: absolute;
    right: 0;
    top: 60px;
    width: 20px;
    z-index: 2;
}

.pane-tabs span {
    display: block;
    height: 24px;
    padding: 4px 0 0 2px;
    overflow: hidden;
    border: 1px solid #6e6f86;
    border-width: 1px 0 1px 2px;
    border-radius: 3px 0 0 3px;
    background: #c0c1d4;
}

.pane-tabs .on {
    background: #f6f7fb;
}

/* model / motion study tabs */
.sheets {
    height: 15px;
    flex: none;
    width: 1353px;
    display: flex;
    border-top: 1px solid #15151c;
    background: #e2e4ea;
    font: 12px/13px "Liberation Sans", sans-serif;
    color: #20202a;
}

.nav {
    width: 68px;
    padding-left: 2px;
    display: flex;
    gap: 1px;
    background: #c4c5d2;
}

.nav span {
    width: 15px;
    height: 14px;
    display: flex;
    align-items: center;
    justify-content: center;
    border: 1px solid #8f90a4;
    background: #b6b7ca;
}

.nav i {
    border: 4px solid transparent;
}

.nav b {
    width: 1px;
    height: 7px;
    background: #85869c;
}

.nav .prev { border-right-color: #85869c; border-left: 0; }
.nav .next { border-left-color: #85869c; border-right: 0; }

.sheet {
    width: 103px;
    height: 14px;
    padding-left: 8px;
    border-right: 2px solid #444556;
    border-bottom: 2px solid #555668;
    background: #bdbed0;
    white-space: nowrap;
}

.sheet.model {
    width: 56px;
    padding-left: 10px;
    border-left: 1px solid #20202a;
    border-bottom: 0;
    font-weight: bold;
    background: #d4d6e2;
}

/* status bar */
.status {
    height: 19px;
    flex: none;
    position: relative;
    z-index: 2;
    display: flex;
    align-items: center;
    padding: 1px 0 0 2px;
    border-top: 1px solid #66677a;
    background: linear-gradient(#d0d1e4, #c4c6de 60%, #b0bed8);
    font: 12px/16px "Noto Sans", sans-serif;
    letter-spacing: -0.3px;
    color: #14141c;
    white-space: nowrap;
}

.edition { width: 984px; }
.under { width: 94px; }
.editing { width: 107px; }

.tick {
    width: 1px;
    height: 12px;
    margin-right: 7px;
    background: #a9abc4;
}

.editing + .tick { margin-left: -2px; }

.units {
    margin-left: 14px;
    width: 45px;
}

.up {
    border: 3px solid transparent;
    border-bottom-color: #444;
    border-top: 0;
}

.q {
    width: 13px;
    height: 13px;
    margin: -2px 50px 0 16px;
    border: 1px solid #3060a0;
    background: #f4fff4;
    font: bold 12px/11px "Liberation Sans", sans-serif;
    text-align: center;
    color: #108818;
}

/* windows taskbar */
.taskbar {
    height: 36px;
    flex: none;
    position: relative;
    display: flex;
    overflow: hidden;
}

.wall {
    position: absolute;
    left: 0;
    top: 0;
}

.app {
    position: relative;
    width: 62px;
    height: 36px;
    padding-top: 5px;
    display: flex;
    justify-content: center;
}

.start { width: 50px; padding-top: 7px; }

.run {
    width: 59px;
    border: 1px solid rgba(240, 215, 160, .5);
    border-bottom: 0;
    background: rgba(220, 190, 130, .4);
}

.ie { width: 56px; padding-top: 2px; margin-left: 1px; }
.ie::after {
    content: "";
    position: absolute;
    right: 2px;
    top: 0;
    width: 1px;
    height: 36px;
    background: rgba(240, 215, 160, .5);
}

.files { width: 69px; padding-top: 6px; }
.chrome { padding-top: 5px; }

.app.current {
    width: 59px;
    margin-left: 3px;
    padding: 3px 4px 0 0;
    border: 1px solid #efe0bc;
    border-bottom: 0;
    background: #d3bc88;
}

.sw {
    font: bold 16px "Liberation Sans", sans-serif;
    fill: #fff;
}

.tray {
    position: absolute;
    left: 1127px;
    top: 0;
    height: 36px;
    display: flex;
    align-items: center;
    padding-top: 5px;
}

.tray-up {
    margin-left: 13px;
    border: 4px solid transparent;
    border-bottom-color: #fff;
    border-top: 0;
}

.t-flag { margin-left: 13px; }
.t-power { margin-left: 7px; }
.t-net { margin-left: 9px; }
.t-sound { margin-left: 10px; }

.clock {
    width: 62px;
    margin-left: 11px;
    font: 12px/17px "Noto Sans", sans-serif;
    letter-spacing: -0.4px;
    text-align: center;
    color: #fff;
}
```
